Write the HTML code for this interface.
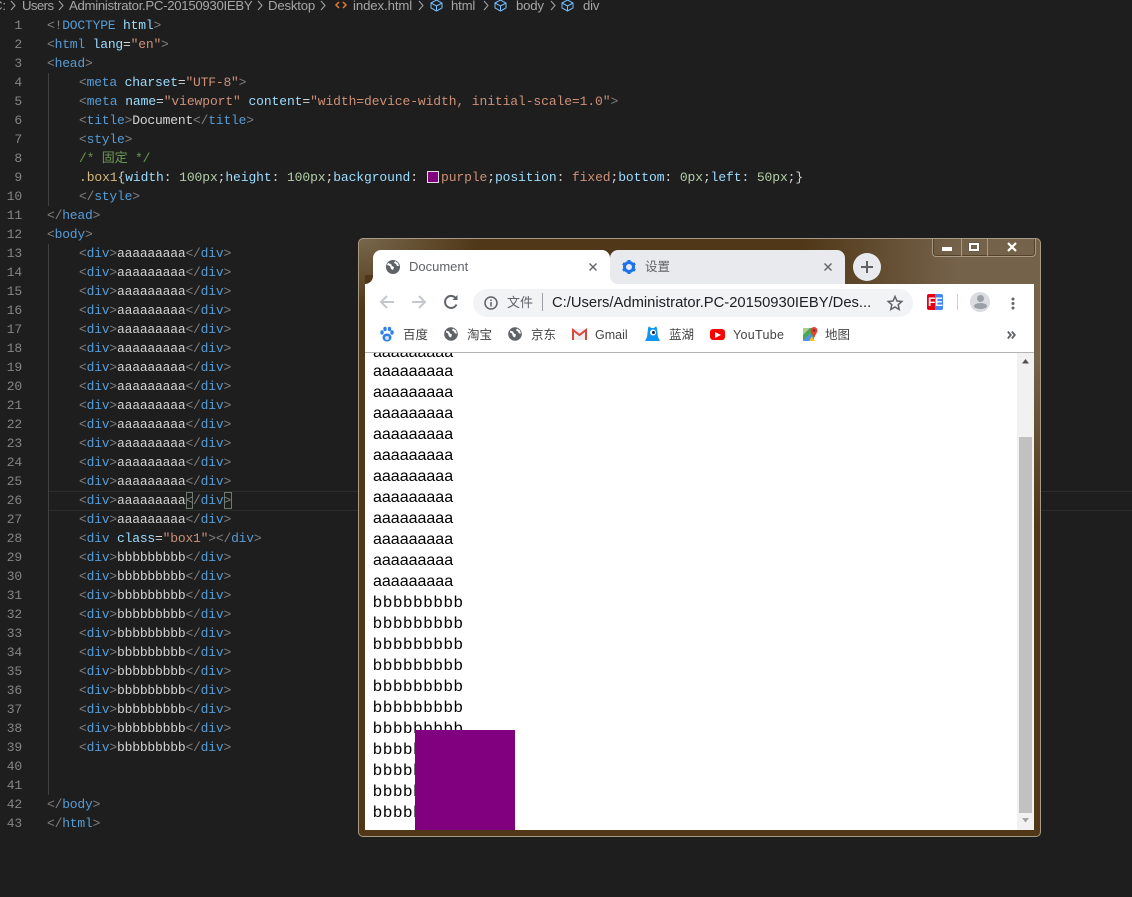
<!DOCTYPE html>
<html lang="zh">
<head>
<meta charset="UTF-8">
<title>Document</title>
<style>
html,body{margin:0;padding:0}
body{width:1132px;height:897px;overflow:hidden;background:#1e1e1e;position:relative;font-family:"Liberation Sans","Noto Sans CJK SC",sans-serif}
.abs,.bc,.n,.l,.g{position:absolute}
.bc{top:-3px;font-size:13.2px;line-height:18px;color:#a6a6a6;white-space:nowrap;letter-spacing:-.2px}
.n{left:0;width:22px;text-align:right;font:13px/19px "Liberation Mono",monospace;color:#858585;letter-spacing:-.2px}
.l{left:47px;font:13px/19px "Liberation Mono","Noto Sans CJK SC",monospace;letter-spacing:-.2px;white-space:pre;color:#d4d4d4}
.i{left:79px}
.w{letter-spacing:-.1px}
.p{color:#808080}.t{color:#569cd6}.a{color:#9cdcfe}.s{color:#ce9178}.c{color:#6a9955}.o{color:#d7ba7d}.m{color:#b5cea8}
#win{position:absolute;left:358px;top:238px;width:681px;height:597px;border:1px solid #a89a84;border-radius:5px;background:radial-gradient(ellipse 120px 70px at 0 0,#78674c 0,rgba(120,103,76,0) 100%),radial-gradient(ellipse 240px 260px at 100% 30px,#75624a 35%,rgba(117,98,74,0) 100%),#4f3717;overflow:hidden}
.tab{position:absolute;top:11px;height:34px;border-radius:8px 8px 0 0}
.tt{position:absolute;font-size:13px;line-height:16px;color:#5f6368;white-space:nowrap}
.bm{position:absolute;top:88px;font-size:12.5px;line-height:16px;color:#444;white-space:nowrap}
.pg{position:absolute;left:8px;font-size:16px;line-height:21px;color:#000;white-space:nowrap}
.b{letter-spacing:1.2px}
svg{position:absolute;overflow:visible}
</style>
</head>
<body>
<div class="bc" style="left:-7px">C:</div>
<div class="bc" style="left:22px;letter-spacing:-.6px">Users</div>
<div class="bc" style="left:69px;letter-spacing:-.3px">Administrator.PC-20150930IEBY</div>
<div class="bc" style="left:268px">Desktop</div>
<div class="bc" style="left:353px;letter-spacing:-.1px">index.html</div>
<div class="bc" style="left:451px">html</div>
<div class="bc" style="left:516px">body</div>
<div class="bc" style="left:583px">div</div>
<svg style="left:0;top:0" width="620" height="16" fill="none" stroke="#a6a6a6" stroke-width="1">
<path d="M11 1l4 4.500-4 4.500M59 1l4 4.500-4 4.500M258 1l4 4.500-4 4.500M321 1l4 4.500-4 4.500M419 1l4 4.500-4 4.500M484 1l4 4.500-4 4.500M551 1l4 4.500-4 4.500"/>
<path d="M339 2l-3 3 3 3M343 2l3 3-3 3" stroke="#e37933" stroke-width="1.500"/>
<g stroke="#75beff"><path d="M431 3l5.500-3 5.500 3v5l-5.500 3-5.500-3zM431 3l5.500 3 5.500-3M436.500 6v5"/><path d="M495 3l5.500-3 5.500 3v5l-5.500 3-5.500-3zM495 3l5.500 3 5.500-3M500.500 6v5"/><path d="M562 3l5.500-3 5.500 3v5l-5.500 3-5.500-3zM562 3l5.500 3 5.500-3M567.500 6v5"/></g>
</svg>
<div class="abs" style="left:48px;top:491px;width:1084px;height:18px;border-top:1px solid #2c2c2c;border-bottom:1px solid #2c2c2c"></div>
<div class="abs" style="left:48px;top:73px;width:1px;height:133px;background:#404040"></div>
<div class="abs" style="left:48px;top:244px;width:1px;height:551px;background:#404040"></div>
<div class="abs" style="left:186px;top:492px;width:7px;height:17px;border:1px solid #6f7a6f;box-sizing:border-box"></div>
<div class="abs" style="left:224px;top:492px;width:8px;height:17px;border:1px solid #6f7a6f;box-sizing:border-box"></div>

<div class="n" style="top:16px">1</div><div class="n" style="top:35px">2</div><div class="n" style="top:54px">3</div><div class="n" style="top:73px">4</div><div class="n" style="top:92px">5</div><div class="n" style="top:111px">6</div><div class="n" style="top:130px">7</div><div class="n" style="top:149px">8</div><div class="n" style="top:168px">9</div><div class="n" style="top:187px">10</div><div class="n" style="top:206px">11</div><div class="n" style="top:225px">12</div><div class="n" style="top:244px">13</div><div class="n" style="top:263px">14</div><div class="n" style="top:282px">15</div><div class="n" style="top:301px">16</div><div class="n" style="top:320px">17</div><div class="n" style="top:339px">18</div><div class="n" style="top:358px">19</div><div class="n" style="top:377px">20</div><div class="n" style="top:396px">21</div><div class="n" style="top:415px">22</div><div class="n" style="top:434px">23</div><div class="n" style="top:453px">24</div><div class="n" style="top:472px">25</div><div class="n" style="top:491px">26</div><div class="n" style="top:510px">27</div><div class="n" style="top:529px">28</div><div class="n" style="top:548px">29</div><div class="n" style="top:567px">30</div><div class="n" style="top:586px">31</div><div class="n" style="top:605px">32</div><div class="n" style="top:624px">33</div><div class="n" style="top:643px">34</div><div class="n" style="top:662px">35</div><div class="n" style="top:681px">36</div><div class="n" style="top:700px">37</div><div class="n" style="top:719px">38</div><div class="n" style="top:738px">39</div><div class="n" style="top:757px">40</div><div class="n" style="top:776px">41</div><div class="n" style="top:795px">42</div><div class="n" style="top:814px">43</div>

<div class="l" style="top:16px"><span class="p">&lt;!</span><span class="t">DOCTYPE</span> <span class="a">html</span><span class="p">&gt;</span></div>
<div class="l" style="top:35px"><span class="p">&lt;</span><span class="t">html</span> <span class="a">lang</span>=<span class="s">"en"</span><span class="p">&gt;</span></div>
<div class="l" style="top:54px"><span class="p">&lt;</span><span class="t">head</span><span class="p">&gt;</span></div>
<div class="l i" style="top:73px"><span class="p">&lt;</span><span class="t">meta</span> <span class="a">charset</span>=<span class="s">"UTF-8"</span><span class="p">&gt;</span></div>
<div class="l i w" style="top:92px"><span class="p">&lt;</span><span class="t">meta</span> <span class="a">name</span>=<span class="s">"viewport"</span> <span class="a">content</span>=<span class="s">"width=device-width, initial-scale=1.0"</span><span class="p">&gt;</span></div>
<div class="l i" style="top:111px"><span class="p">&lt;</span><span class="t">title</span><span class="p">&gt;</span>Document<span class="p">&lt;/</span><span class="t">title</span><span class="p">&gt;</span></div>
<div class="l i" style="top:130px"><span class="p">&lt;</span><span class="t">style</span><span class="p">&gt;</span></div>
<div class="l i" style="top:149px"><span class="c">/* 固定 */</span></div>
<div class="l i w" style="top:168px"><span class="o">.box1</span>{<span class="a">width</span>: <span class="m">100px</span>;<span class="a">height</span>: <span class="m">100px</span>;<span class="a">background</span>:   <span class="s">purple</span>;<span class="a">position</span>: <span class="s">fixed</span>;<span class="a">bottom</span>: <span class="m">0px</span>;<span class="a">left</span>: <span class="m">50px</span>;}</div>
<div class="abs" style="left:427px;top:171px;width:10px;height:10px;background:#800080;border:1px solid #ddd"></div>
<div class="l i" style="top:187px"><span class="p">&lt;/</span><span class="t">style</span><span class="p">&gt;</span></div>
<div class="l" style="top:206px"><span class="p">&lt;/</span><span class="t">head</span><span class="p">&gt;</span></div>
<div class="l" style="top:225px"><span class="p">&lt;</span><span class="t">body</span><span class="p">&gt;</span></div>
<div class="l i" style="top:244px"><span class="p">&lt;</span><span class="t">div</span><span class="p">&gt;</span>aaaaaaaaa<span class="p">&lt;/</span><span class="t">div</span><span class="p">&gt;</span></div>
<div class="l i" style="top:263px"><span class="p">&lt;</span><span class="t">div</span><span class="p">&gt;</span>aaaaaaaaa<span class="p">&lt;/</span><span class="t">div</span><span class="p">&gt;</span></div>
<div class="l i" style="top:282px"><span class="p">&lt;</span><span class="t">div</span><span class="p">&gt;</span>aaaaaaaaa<span class="p">&lt;/</span><span class="t">div</span><span class="p">&gt;</span></div>
<div class="l i" style="top:301px"><span class="p">&lt;</span><span class="t">div</span><span class="p">&gt;</span>aaaaaaaaa<span class="p">&lt;/</span><span class="t">div</span><span class="p">&gt;</span></div>
<div class="l i" style="top:320px"><span class="p">&lt;</span><span class="t">div</span><span class="p">&gt;</span>aaaaaaaaa<span class="p">&lt;/</span><span class="t">div</span><span class="p">&gt;</span></div>
<div class="l i" style="top:339px"><span class="p">&lt;</span><span class="t">div</span><span class="p">&gt;</span>aaaaaaaaa<span class="p">&lt;/</span><span class="t">div</span><span class="p">&gt;</span></div>
<div class="l i" style="top:358px"><span class="p">&lt;</span><span class="t">div</span><span class="p">&gt;</span>aaaaaaaaa<span class="p">&lt;/</span><span class="t">div</span><span class="p">&gt;</span></div>
<div class="l i" style="top:377px"><span class="p">&lt;</span><span class="t">div</span><span class="p">&gt;</span>aaaaaaaaa<span class="p">&lt;/</span><span class="t">div</span><span class="p">&gt;</span></div>
<div class="l i" style="top:396px"><span class="p">&lt;</span><span class="t">div</span><span class="p">&gt;</span>aaaaaaaaa<span class="p">&lt;/</span><span class="t">div</span><span class="p">&gt;</span></div>
<div class="l i" style="top:415px"><span class="p">&lt;</span><span class="t">div</span><span class="p">&gt;</span>aaaaaaaaa<span class="p">&lt;/</span><span class="t">div</span><span class="p">&gt;</span></div>
<div class="l i" style="top:434px"><span class="p">&lt;</span><span class="t">div</span><span class="p">&gt;</span>aaaaaaaaa<span class="p">&lt;/</span><span class="t">div</span><span class="p">&gt;</span></div>
<div class="l i" style="top:453px"><span class="p">&lt;</span><span class="t">div</span><span class="p">&gt;</span>aaaaaaaaa<span class="p">&lt;/</span><span class="t">div</span><span class="p">&gt;</span></div>
<div class="l i" style="top:472px"><span class="p">&lt;</span><span class="t">div</span><span class="p">&gt;</span>aaaaaaaaa<span class="p">&lt;/</span><span class="t">div</span><span class="p">&gt;</span></div>
<div class="l i" style="top:491px"><span class="p">&lt;</span><span class="t">div</span><span class="p">&gt;</span>aaaaaaaaa<span class="p">&lt;/</span><span class="t">div</span><span class="p">&gt;</span></div>
<div class="l i" style="top:510px"><span class="p">&lt;</span><span class="t">div</span><span class="p">&gt;</span>aaaaaaaaa<span class="p">&lt;/</span><span class="t">div</span><span class="p">&gt;</span></div>
<div class="l i" style="top:529px"><span class="p">&lt;</span><span class="t">div</span> <span class="a">class</span>=<span class="s">"box1"</span><span class="p">&gt;&lt;/</span><span class="t">div</span><span class="p">&gt;</span></div>
<div class="l i" style="top:548px"><span class="p">&lt;</span><span class="t">div</span><span class="p">&gt;</span>bbbbbbbbb<span class="p">&lt;/</span><span class="t">div</span><span class="p">&gt;</span></div>
<div class="l i" style="top:567px"><span class="p">&lt;</span><span class="t">div</span><span class="p">&gt;</span>bbbbbbbbb<span class="p">&lt;/</span><span class="t">div</span><span class="p">&gt;</span></div>
<div class="l i" style="top:586px"><span class="p">&lt;</span><span class="t">div</span><span class="p">&gt;</span>bbbbbbbbb<span class="p">&lt;/</span><span class="t">div</span><span class="p">&gt;</span></div>
<div class="l i" style="top:605px"><span class="p">&lt;</span><span class="t">div</span><span class="p">&gt;</span>bbbbbbbbb<span class="p">&lt;/</span><span class="t">div</span><span class="p">&gt;</span></div>
<div class="l i" style="top:624px"><span class="p">&lt;</span><span class="t">div</span><span class="p">&gt;</span>bbbbbbbbb<span class="p">&lt;/</span><span class="t">div</span><span class="p">&gt;</span></div>
<div class="l i" style="top:643px"><span class="p">&lt;</span><span class="t">div</span><span class="p">&gt;</span>bbbbbbbbb<span class="p">&lt;/</span><span class="t">div</span><span class="p">&gt;</span></div>
<div class="l i" style="top:662px"><span class="p">&lt;</span><span class="t">div</span><span class="p">&gt;</span>bbbbbbbbb<span class="p">&lt;/</span><span class="t">div</span><span class="p">&gt;</span></div>
<div class="l i" style="top:681px"><span class="p">&lt;</span><span class="t">div</span><span class="p">&gt;</span>bbbbbbbbb<span class="p">&lt;/</span><span class="t">div</span><span class="p">&gt;</span></div>
<div class="l i" style="top:700px"><span class="p">&lt;</span><span class="t">div</span><span class="p">&gt;</span>bbbbbbbbb<span class="p">&lt;/</span><span class="t">div</span><span class="p">&gt;</span></div>
<div class="l i" style="top:719px"><span class="p">&lt;</span><span class="t">div</span><span class="p">&gt;</span>bbbbbbbbb<span class="p">&lt;/</span><span class="t">div</span><span class="p">&gt;</span></div>
<div class="l i" style="top:738px"><span class="p">&lt;</span><span class="t">div</span><span class="p">&gt;</span>bbbbbbbbb<span class="p">&lt;/</span><span class="t">div</span><span class="p">&gt;</span></div>
<div class="l" style="top:795px"><span class="p">&lt;/</span><span class="t">body</span><span class="p">&gt;</span></div>
<div class="l" style="top:814px"><span class="p">&lt;/</span><span class="t">html</span><span class="p">&gt;</span></div>

<div id="win">
  <!-- coordinates in this box: page x-359, y-239 -->
  <div class="abs" style="left:6px;top:45px;width:669px;height:546px;background:#fff"></div>

  <!-- window buttons -->
  <div class="abs" style="left:573px;top:-1px;width:104px;height:19px;border:1px solid #a89a84;border-top:none;border-radius:0 0 4px 4px;box-sizing:border-box;box-shadow:inset 0 0 0 1px rgba(60,40,15,.55)"></div>
  <div class="abs" style="left:602px;top:-1px;width:1px;height:18px;background:#a89a84"></div>
  <div class="abs" style="left:628px;top:-1px;width:1px;height:18px;background:#a89a84"></div>
  <div class="abs" style="left:583px;top:8px;width:10px;height:4px;background:#fff"></div>
  <div class="abs" style="left:610px;top:4px;width:6px;height:4px;border:2px solid #fff;box-shadow:0 0 1px #333"></div>
  <svg style="left:648px;top:4px" width="10" height="8"><path d="M1 0l8 8M9 0l-8 8" stroke="#fff" stroke-width="2.200"/></svg>

  <!-- tabs -->
  <div class="tab" style="left:14px;width:237px;background:#fff"></div>
  <div class="abs" style="left:6px;top:37px;width:8px;height:8px;background:#fff"></div>
  <div class="abs" style="left:6px;top:36px;width:8px;height:9px;background:#4f3717;border-radius:0 0 8px 0"></div>
  <div class="tab" style="left:251px;width:235px;background:#e8eaed"></div>
  <div class="abs" style="left:251px;top:37px;width:8px;height:8px;background:#fff"></div>
  <div class="abs" style="left:251px;top:36px;width:8px;height:9px;background:#e8eaed;border-radius:0 0 0 8px"></div>
  <svg style="left:26px;top:20px" width="16" height="16"><circle cx="8" cy="8" r="7" fill="#5f6368"/><path d="M3 4l3 1 1 2 2 1-1 3-2-1-1-3-3-1zM10 2l3 2 1 3-2 0-1-2-2-1z" fill="#fff"/></svg>
  <div class="tt" style="left:50px;top:20px">Document</div>
  <svg style="left:230px;top:24px" width="8" height="8"><path d="M.5.500l7 7M7.500.500l-7 7" stroke="#5f6368" stroke-width="1.400"/></svg>
  <svg style="left:465px;top:24px" width="8" height="8"><path d="M.5.500l7 7M7.500.500l-7 7" stroke="#5f6368" stroke-width="1.400"/></svg>
  <svg style="left:262px;top:20px" width="16" height="16"><circle cx="8" cy="8" r="4.500" fill="none" stroke="#1a73e8" stroke-width="3"/><path d="M8 1v3M8 12v3M1.900 4.500l2.600 1.500M11.500 10l2.600 1.500M1.900 11.500l2.600-1.500M11.500 6l2.600-1.500" stroke="#1a73e8" stroke-width="3"/></svg>
  <div class="tt" style="left:286px;top:20px;font-size:12.5px">设置</div>
  <div class="abs" style="left:494px;top:14px;width:28px;height:28px;border-radius:50%;background:#e8eaed"></div>
  <svg style="left:501px;top:21px" width="14" height="14"><path d="M7 1v12M1 7h12" stroke="#5f6368" stroke-width="2"/></svg>

  <!-- toolbar -->
  <svg style="left:20px;top:55px" width="16" height="16" fill="none" stroke="#c4c7cb" stroke-width="2"><path d="M15 8H2M8 2L2 8l6 6"/></svg>
  <svg style="left:52px;top:55px" width="16" height="16" fill="none" stroke="#c4c7cb" stroke-width="2"><path d="M1 8h13M8 2l6 6-6 6"/></svg>
  <svg style="left:84px;top:55px" width="16" height="16" fill="none" stroke="#5f6368" stroke-width="2"><path d="M13.500 10.500A6 6 0 1 1 13 4.500"/><path d="M14.500 1v5h-5z" fill="#5f6368" stroke="none"/></svg>
  <div class="abs" style="left:114px;top:50px;width:440px;height:28px;border-radius:14px;background:#f1f3f4"></div>
  <svg style="left:124px;top:56px" width="16" height="16" fill="none" stroke="#5f6368" stroke-width="1.500"><circle cx="8" cy="8" r="6"/><path d="M8 7v4.500M8 4.500v1.500"/></svg>
  <div class="abs" style="left:148px;top:55px;font-size:13px;line-height:17px;color:#5f6368">文件</div>
  <div class="abs" style="left:183px;top:54px;width:1px;height:18px;background:#9aa0a6"></div>
  <div class="abs" style="left:193px;top:55px;font-size:14.780px;line-height:19px;color:#202124;white-space:nowrap">C:/Users/Administrator.PC-20150930IEBY/Des...</div>
  <svg style="left:528px;top:56px" width="16" height="15" fill="none" stroke="#5f6368" stroke-width="1.500"><path d="M8 1.500l2 4.500 4.800.5-3.600 3.200 1 4.800L8 12l-4.200 2.500 1-4.800L1.200 6.500 6 6z"/></svg>
  <div class="abs" style="left:568px;top:55px;width:8px;height:16px;background:#e60012;border-radius:2px 0 0 2px"></div>
  <div class="abs" style="left:576px;top:55px;width:8px;height:16px;background:#4285f4;border-radius:0 2px 2px 0"></div>
  <div class="abs" style="left:569px;top:57px;font:bold 12px/13px 'Liberation Sans',sans-serif;color:#fff;letter-spacing:-.5px">FE</div>
  <div class="abs" style="left:598px;top:55px;width:1px;height:16px;background:#d0d0d0"></div>
  <div class="abs" style="left:611px;top:53px;width:20px;height:20px;border-radius:50%;background:#dadce0;overflow:hidden">
    <div class="abs" style="left:6.500px;top:3px;width:7px;height:7px;border-radius:50%;background:#9aa0a6"></div>
    <div class="abs" style="left:3.500px;top:11px;width:13px;height:6px;border-radius:50%;background:#9aa0a6"></div>
  </div>
  <svg style="left:652px;top:58px" width="4" height="13" fill="#5f6368"><circle cx="2" cy="2" r="1.500"/><circle cx="2" cy="6.500" r="1.500"/><circle cx="2" cy="11" r="1.500"/></svg>

  <!-- bookmarks -->
  <svg style="left:21px;top:87px" width="14" height="16" fill="#2d7ff0"><ellipse cx="7" cy="11.500" rx="4.500" ry="4"/><ellipse cx="2" cy="6.500" rx="1.700" ry="2.200"/><ellipse cx="12" cy="6.500" rx="1.700" ry="2.200"/><ellipse cx="5" cy="3" rx="1.700" ry="2.200"/><ellipse cx="9.500" cy="3" rx="1.700" ry="2.200"/><circle cx="7" cy="12" r="2" fill="#cfe2ff"/></svg>
  <div class="bm" style="left:44px">百度</div>
  <svg style="left:85px;top:88px" width="14" height="14"><circle cx="7" cy="7" r="6.800" fill="#5f6368"/><path d="M2 3.500l3 1 1 2 2 1-1 3-2-1-1-3-2-1zM9 1.500l3 2 1 3-2 0-1-2-2-1z" fill="#fff"/></svg>
  <div class="bm" style="left:108px">淘宝</div>
  <svg style="left:149px;top:88px" width="14" height="14"><circle cx="7" cy="7" r="6.800" fill="#5f6368"/><path d="M2 3.500l3 1 1 2 2 1-1 3-2-1-1-3-2-1zM9 1.500l3 2 1 3-2 0-1-2-2-1z" fill="#fff"/></svg>
  <div class="bm" style="left:172px">京东</div>
  <svg style="left:213px;top:90px" width="15" height="11"><path d="M0 0h15v11H0z" fill="#eee"/><path d="M1 11V1l6.500 5L14 1v10" fill="none" stroke="#d9463c" stroke-width="2"/></svg>
  <div class="bm" style="left:236px">Gmail</div>
  <svg style="left:286px;top:87px" width="15" height="16"><path d="M3 3c0-2 1-3 2-2l1 1h3l1-1c1-1 2 0 2 2l1 8 2 4H0l2-4z" fill="#0f95f5"/><circle cx="8" cy="6.500" r="3" fill="#fff"/><circle cx="8.500" cy="6.500" r="1.500" fill="#123"/></svg>
  <div class="bm" style="left:310px">蓝湖</div>
  <div class="abs" style="left:351px;top:90px;width:15px;height:11px;background:#f00;border-radius:3px"></div>
  <svg style="left:356px;top:93px" width="6" height="6"><path d="M0 0l6 3-6 3z" fill="#fff"/></svg>
  <div class="bm" style="left:374px;letter-spacing:.3px">YouTube</div>
  <svg style="left:443px;top:87px" width="16" height="16"><path d="M1 2h11v13H1z" fill="#48a85a"/><path d="M1 15l7-7 5 7z" fill="#f6c21c"/><path d="M1 15L8 8l2 2-3 5z" fill="#4d90fe"/><path d="M1 2h7L1 9z" fill="#a8d08d"/><circle cx="12" cy="4.500" r="3.500" fill="#db4437"/><path d="M9 6l3 6 3-6z" fill="#db4437"/><circle cx="12" cy="4.500" r="1.200" fill="#8c2a22"/></svg>
  <div class="bm" style="left:466px">地图</div>
  <svg style="left:648px;top:92px" width="9" height="8" fill="none" stroke="#5f6368" stroke-width="1.800"><path d="M.8.500l3 3.500-3 3.500M4.800.500l3 3.500-3 3.500"/></svg>
  <div class="abs" style="left:6px;top:113px;width:669px;height:1px;background:#b4b4b4"></div>

  <!-- page viewport -->
  <div class="abs" style="left:6px;top:114px;width:669px;height:477px;background:#fff;overflow:hidden">
    <div class="pg" style="top:-11px">aaaaaaaaa</div>
    <div class="pg" style="top:8px">aaaaaaaaa</div>
    <div class="pg" style="top:29px">aaaaaaaaa</div>
    <div class="pg" style="top:50px">aaaaaaaaa</div>
    <div class="pg" style="top:71px">aaaaaaaaa</div>
    <div class="pg" style="top:92px">aaaaaaaaa</div>
    <div class="pg" style="top:113px">aaaaaaaaa</div>
    <div class="pg" style="top:134px">aaaaaaaaa</div>
    <div class="pg" style="top:155px">aaaaaaaaa</div>
    <div class="pg" style="top:176px">aaaaaaaaa</div>
    <div class="pg" style="top:197px">aaaaaaaaa</div>
    <div class="pg" style="top:218px">aaaaaaaaa</div>
    <div class="pg b" style="top:239px">bbbbbbbbb</div>
    <div class="pg b" style="top:260px">bbbbbbbbb</div>
    <div class="pg b" style="top:281px">bbbbbbbbb</div>
    <div class="pg b" style="top:302px">bbbbbbbbb</div>
    <div class="pg b" style="top:323px">bbbbbbbbb</div>
    <div class="pg b" style="top:344px">bbbbbbbbb</div>
    <div class="pg b" style="top:365px">bbbbbbbbb</div>
    <div class="pg b" style="top:386px">bbbbbbbbb</div>
    <div class="pg b" style="top:407px">bbbbbbbbb</div>
    <div class="pg b" style="top:428px">bbbbbbbbb</div>
    <div class="pg b" style="top:449px">bbbbbbbbb</div>
    <div class="abs" style="left:50px;top:377px;width:100px;height:100px;background:#800080"></div>
    <!-- scrollbar -->
    <div class="abs" style="left:652px;top:0;width:17px;height:477px;background:#f1f1f1"></div>
    <div class="abs" style="left:654px;top:84px;width:13px;height:376px;background:#c1c1c1"></div>
    <svg style="left:656px;top:6px" width="9" height="5"><path d="M4.500 0l3.500 4.500H1z" fill="#505050"/></svg>
    <svg style="left:656px;top:465px" width="9" height="5"><path d="M1 0h7L4.500 4.500z" fill="#a3a3a3"/></svg>
  </div>
</div>
</body>
</html>
